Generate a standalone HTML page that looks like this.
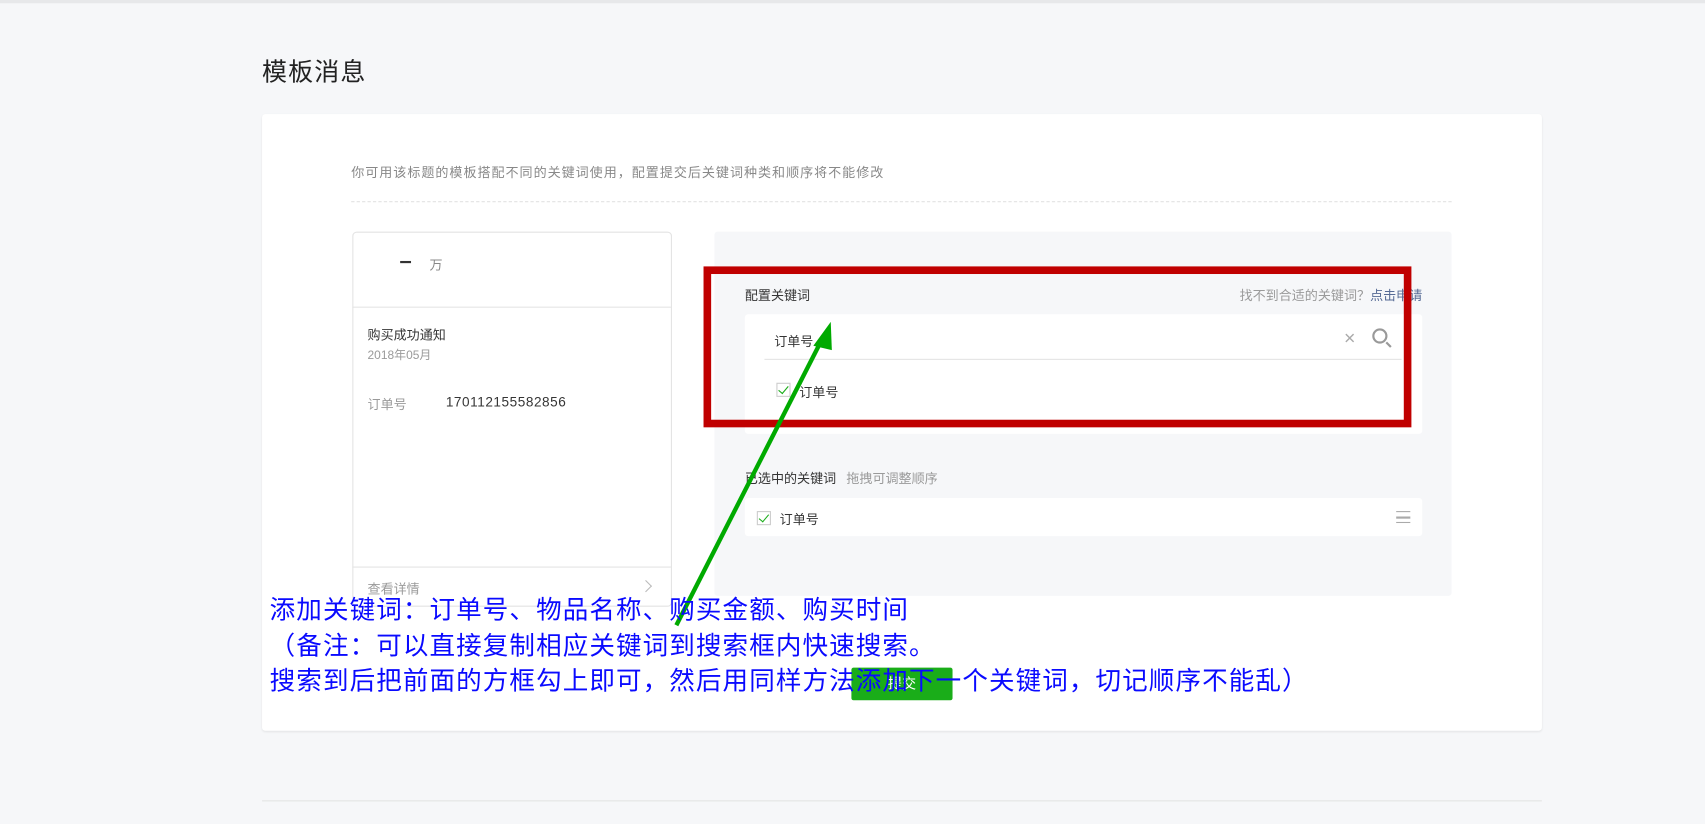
<!DOCTYPE html><html><head><meta charset="utf-8"><style>
*{margin:0;padding:0;box-sizing:border-box}
html,body{width:1705px;height:824px;overflow:hidden;background:#f6f7f9;font-family:"Liberation Sans","Noto Sans CJK SC",sans-serif}
#w{position:absolute;left:0;top:0;width:1568px;height:758px;transform:scale(1.08737);transform-origin:0 0}
.a{position:absolute}
.t12{font-size:12px;color:#353535;white-space:nowrap}
.g{color:#9a9a9a}
.cb{position:absolute;width:13px;height:13px;border:1px solid #ccc;background:#fff}
.cb:after{content:"";position:absolute;left:3px;top:0px;width:4px;height:8px;border:solid #1aad19;border-width:0 1.5px 1.5px 0;transform:rotate(40deg)}
.blue{position:absolute;left:248px;font-size:23.5px;letter-spacing:1px;line-height:28px;color:#0a0aff;white-space:nowrap;font-family:"Liberation Sans","Noto Sans CJK SC",sans-serif}
</style></head><body><div id="w">
<div class="a" style="left:0;top:0;width:1568px;height:3px;background:#e7e8ea"></div>
<div class="a" style="left:241px;top:47px;font-size:23px;letter-spacing:1px;color:#222">模板消息</div>
<div class="a" style="left:241px;top:105px;width:1177px;height:567px;background:#fff;border-radius:3px;box-shadow:0 1px 2px rgba(0,0,0,.08)"></div>
<div class="a t12 g" style="left:323px;top:150px;color:#888;letter-spacing:0.9px">你可用该标题的模板搭配不同的关键词使用，配置提交后关键词种类和顺序将不能修改</div>
<div class="a" style="left:323px;top:185px;width:1012px;border-top:1px dashed #e2e2e2"></div>
<div class="a" style="left:324px;top:213px;width:294px;height:345px;border:1px solid #e4e4e4;border-radius:4px;background:#fff"></div>
<div class="a" style="left:324px;top:282px;width:294px;border-top:1px solid #e4e4e4"></div>
<div class="a" style="left:368px;top:240px;width:10px;height:2px;background:#333"></div>
<div class="a t12" style="left:395px;top:235px;color:#888">万</div>
<div class="a t12" style="left:338px;top:299px">购买成功通知</div>
<div class="a t12 g" style="left:338px;top:318px;font-size:11px">2018年05月</div>
<div class="a t12 g" style="left:338px;top:363px">订单号</div>
<div class="a t12" style="left:410px;top:363px;font-size:12.5px;letter-spacing:0.5px">170112155582856</div>
<div class="a" style="left:324px;top:521px;width:294px;border-top:1px solid #e4e4e4"></div>
<div class="a t12 g" style="left:338px;top:533px">查看详情</div>
<div class="a" style="left:590px;top:535px;width:8px;height:8px;border:solid #bbb;border-width:1.5px 1.5px 0 0;transform:rotate(45deg)"></div>
<div class="a" style="left:657px;top:213px;width:678px;height:335px;background:#f6f7f9;border-radius:3px"></div>
<div class="a t12" style="left:685px;top:263px">配置关键词</div>
<div class="a t12 g" style="right:260px;top:263px">找不到合适的关键词？<span style="color:#576b95">点击申请</span></div>
<div class="a" style="left:685px;top:289px;width:623px;height:110px;background:#fff;border-radius:3px"></div>
<div class="a t12" style="left:712px;top:305px">订单号</div>
<div class="a" style="left:703px;top:330px;width:586px;border-top:1px solid #e4e4e4"></div>
<div class="a" style="left:1236px;top:303px;font-size:18px;color:#aaa;line-height:16px">×</div>
<div class="a" style="left:1262px;top:302px;width:14px;height:14px;border:2px solid #999;border-radius:50%"></div>
<div class="a" style="left:1274px;top:316px;width:6px;height:2px;background:#999;transform:rotate(45deg)"></div>
<div class="cb" style="left:714px;top:352px"></div>
<div class="a t12" style="left:735px;top:352px">订单号</div>
<div class="a" style="left:647px;top:245px;width:651px;height:148px;border:7px solid #c00000"></div>
<div class="a t12" style="left:685px;top:431px">已选中的关键词 <span class="g" style="margin-left:6px">拖拽可调整顺序</span></div>
<div class="a" style="left:685px;top:458px;width:623px;height:35px;background:#fff;border-radius:3px"></div>
<div class="cb" style="left:696px;top:470px"></div>
<div class="a t12" style="left:717px;top:469px">订单号</div>
<div class="a" style="left:1284px;top:470px;width:13px;height:11px;border-top:1.5px solid #aaa;border-bottom:1.5px solid #aaa"></div>
<div class="a" style="left:1284px;top:475px;width:13px;height:1.5px;background:#aaa"></div>
<div class="a" style="left:783px;top:614px;width:93px;height:30px;background:#1aad19;border-radius:2px;color:#fff;font-size:13px;text-align:center;line-height:30px">提交</div>
<div class="a" style="left:241px;top:736px;width:1177px;border-top:1px solid #e4e4e4"></div>
<svg class="a" style="left:0;top:0" width="1568" height="758"><line x1="622" y1="575" x2="757" y2="310" stroke="#00aa00" stroke-width="4"/><polygon points="764,296 748,318 765,322" fill="#00aa00"/></svg>
<div class="blue" style="top:547px">添加关键词：订单号、物品名称、购买金额、购买时间</div>
<div class="blue" style="top:580px">（备注：可以直接复制相应关键词到搜索框内快速搜索。</div>
<div class="blue" style="top:612px">搜索到后把前面的方框勾上即可，然后用同样方法添加下一个关键词，切记顺序不能乱）</div>
</div></body></html>
